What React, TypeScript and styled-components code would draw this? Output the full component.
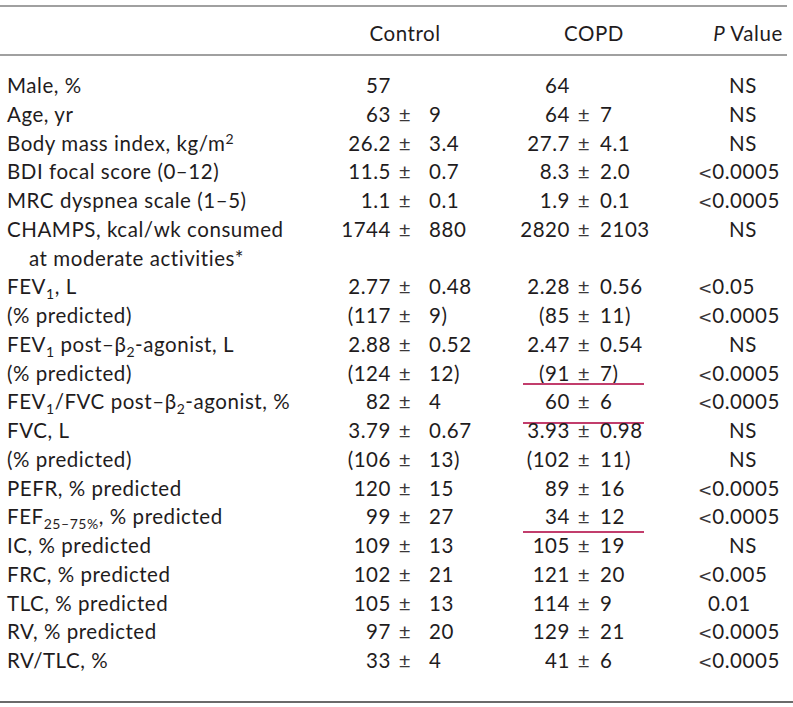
import React from "react";
import styled, { createGlobalStyle } from "styled-components";

const Global = createGlobalStyle`
  html, body { margin: 0; padding: 0; background: #ffffff; }
  body { font-family: "Lato", "Liberation Sans", sans-serif; color: #1f1c1d; }
`;

const Page = styled.div`
  width: 793px;
  padding-top: 5px;
  font-size: 20.5px;
  letter-spacing: 0.55px;
`;

const Rule = styled.div<{ $h: number; $c: string; $inset: number }>`
  height: ${(p) => p.$h}px;
  background: ${(p) => p.$c};
  margin-right: ${(p) => p.$inset}px;
`;

const HeaderRow = styled.div`
  display: grid;
  grid-template-columns: 333px 130px 50px 148px 35px 90px;
  padding: 12px 0 7px 7px;
  line-height: 28px;
`;

const HeadCell = styled.div<{ $col: number }>`
  grid-column: ${(p) => p.$col};
  text-align: center;
  white-space: nowrap;
`;

const Body = styled.div`
  padding: 15px 0 26px;
`;

const Row = styled.div`
  position: relative;
  display: grid;
  grid-template-columns: 333px 51px 28px 81px 70px 28px 100px 95px;
  align-items: start;
  padding-left: 7px;
  height: 28.75px;
  line-height: 28.75px;
  white-space: nowrap;
`;

const TallRow = styled(Row)`
  height: 57.5px;
`;

const Label = styled.div`
  white-space: nowrap;
`;

const Cont = styled.div`
  padding-left: 22px;
`;

const NumL = styled.div`
  text-align: right;
`;

const Pm = styled.div`
  text-align: center;
  color: #3a3738;
`;

const NumR = styled.div<{ $pad: number }>`
  text-align: left;
  padding-left: ${(p) => p.$pad}px;
`;

const PCell = styled.div<{ $kind: "lt" | "ns" | "num" }>`
  width: ${(p) => (p.$kind === "ns" ? "90px" : "auto")};
  text-align: ${(p) => (p.$kind === "ns" ? "center" : "left")};
  padding-left: ${(p) => (p.$kind === "num" ? "10px" : "0")};
`;

const LtSign = styled.span`
  font-family: "DejaVu Sans", sans-serif;
  font-size: 17px;
  line-height: 0;
  letter-spacing: 0;
  color: #3a3738;
`;

const Sub = styled.span`
  font-size: 14px;
  position: relative;
  top: 5px;
  line-height: 0;
`;

const Sup = styled.span`
  font-size: 14px;
  position: relative;
  top: -7px;
  line-height: 0;
`;

const Ital = styled.span`
  font-style: italic;
`;

const Mark = styled.div<{ $top: number }>`
  position: absolute;
  left: 523px;
  width: 121px;
  top: ${(p) => p.$top}px;
  height: 2px;
  background: #c23d6c;
`;

type Val = [string, string?];
type RowData = {
  label: React.ReactNode;
  cont?: string;
  c: Val;
  d: Val;
  p: string;
  mark?: number;
};

const fev1 = (
  <>
    FEV<Sub>1</Sub>
  </>
);
const beta = (
  <>
    β<Sub>2</Sub>
  </>
);

const rows: RowData[] = [
  { label: "Male, %", c: ["57"], d: ["64"], p: "NS" },
  { label: "Age, yr", c: ["63", "9"], d: ["64", "7"], p: "NS" },
  {
    label: (
      <>
        Body mass index, kg/m<Sup>2</Sup>
      </>
    ),
    c: ["26.2", "3.4"],
    d: ["27.7", "4.1"],
    p: "NS",
  },
  { label: "BDI focal score (0–12)", c: ["11.5", "0.7"], d: ["8.3", "2.0"], p: "<0.0005" },
  { label: "MRC dyspnea scale (1–5)", c: ["1.1", "0.1"], d: ["1.9", "0.1"], p: "<0.0005" },
  {
    label: "CHAMPS, kcal/wk consumed",
    cont: "at moderate activities*",
    c: ["1744", "880"],
    d: ["2820", "2103"],
    p: "NS",
  },
  { label: <>{fev1}, L</>, c: ["2.77", "0.48"], d: ["2.28", "0.56"], p: "<0.05" },
  { label: "(% predicted)", c: ["(117", "9)"], d: ["(85", "11)"], p: "<0.0005" },
  {
    label: (
      <>
        {fev1} post–{beta}-agonist, L
      </>
    ),
    c: ["2.88", "0.52"],
    d: ["2.47", "0.54"],
    p: "NS",
  },
  { label: "(% predicted)", c: ["(124", "12)"], d: ["(91", "7)"], p: "<0.0005", mark: 24 },
  {
    label: (
      <>
        {fev1}/FVC post–{beta}-agonist, %
      </>
    ),
    c: ["82", "4"],
    d: ["60", "6"],
    p: "<0.0005",
    mark: 34.5,
  },
  { label: "FVC, L", c: ["3.79", "0.67"], d: ["3.93", "0.98"], p: "NS" },
  { label: "(% predicted)", c: ["(106", "13)"], d: ["(102", "11)"], p: "NS" },
  { label: "PEFR, % predicted", c: ["120", "15"], d: ["89", "16"], p: "<0.0005" },
  {
    label: (
      <>
        FEF<Sub>25–75%</Sub>, % predicted
      </>
    ),
    c: ["99", "27"],
    d: ["34", "12"],
    p: "<0.0005",
    mark: 29,
  },
  { label: "IC, % predicted", c: ["109", "13"], d: ["105", "19"], p: "NS" },
  { label: "FRC, % predicted", c: ["102", "21"], d: ["121", "20"], p: "<0.005" },
  { label: "TLC, % predicted", c: ["105", "13"], d: ["114", "9"], p: "0.01" },
  { label: "RV, % predicted", c: ["97", "20"], d: ["129", "21"], p: "<0.0005" },
  { label: "RV/TLC, %", c: ["33", "4"], d: ["41", "6"], p: "<0.0005" },
];

const kindOf = (p: string): "lt" | "ns" | "num" =>
  p.startsWith("<") ? "lt" : p === "NS" ? "ns" : "num";

function ValueCells({ v, pad }: { v: Val; pad: number }) {
  return (
    <>
      <NumL>{v[0]}</NumL>
      <Pm>{v[1] ? "±" : ""}</Pm>
      <NumR $pad={pad}>{v[1] ?? ""}</NumR>
    </>
  );
}

function PValue({ p }: { p: string }) {
  const kind = kindOf(p);
  return (
    <PCell $kind={kind}>
      {kind === "lt" ? (
        <>
          <LtSign>&lt;</LtSign>
          {p.slice(1)}
        </>
      ) : (
        p
      )}
    </PCell>
  );
}

export default function App() {
  return (
    <>
      <Global />
      <Page>
        <Rule $h={2} $c="#a0a0a0" $inset={6} />
        <HeaderRow>
          <HeadCell $col={2}>Control</HeadCell>
          <HeadCell $col={4}>COPD</HeadCell>
          <HeadCell $col={6}>
            <Ital>P</Ital> Value
          </HeadCell>
        </HeaderRow>
        <Rule $h={2} $c="#a0a0a0" $inset={6} />
        <Body>
          {rows.map((r, i) => {
            const R = r.cont ? TallRow : Row;
            return (
              <R key={i}>
                <Label>
                  {r.label}
                  {r.cont && <Cont>{r.cont}</Cont>}
                </Label>
                <ValueCells v={r.c} pad={10} />
                <ValueCells v={r.d} pad={2} />
                <PValue p={r.p} />
                {r.mark !== undefined && <Mark $top={r.mark} />}
              </R>
            );
          })}
        </Body>
        <Rule $h={2} $c="#6a6a6a" $inset={0} />
      </Page>
    </>
  );
}
